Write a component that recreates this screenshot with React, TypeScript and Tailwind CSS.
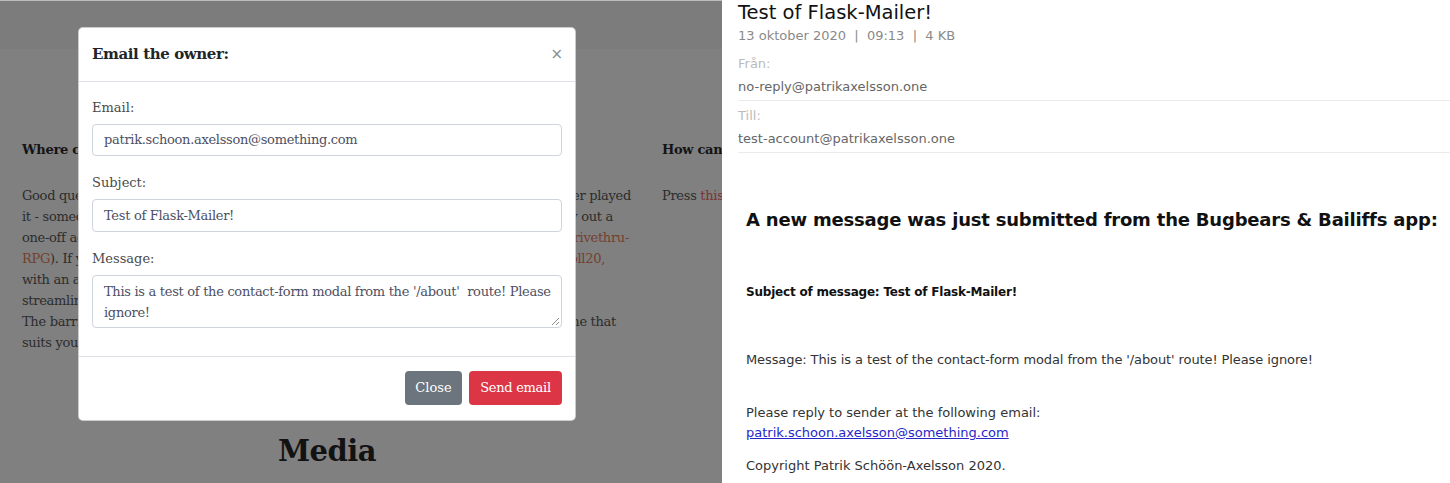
import React from 'react';

type Line = { left: React.ReactNode; right?: React.ReactNode; pr?: string };

const LINK = 'text-[#74402f]';

// ragged right edge of the paragraph, peeking out from behind the modal
const aboutLines: Line[] = [
  { left: 'Good question! Not many have', right: 'ever played', pr: 'pr-[1px]' },
  { left: 'it - someone might', right: 'to try out a', pr: 'pr-[19px]' },
  { left: 'one-off adventure.', right: <span className={LINK}>Drivethru-</span>, pr: 'pr-[3px]' },
  {
    left: (
      <>
        <span className={LINK}>RPG</span>). If you prefer
      </>
    ),
    right: <span className={LINK}>Roll20,</span>,
    pr: 'pr-[27px]',
  },
  { left: 'with an automated' },
  { left: 'streamlined play.' },
  { left: 'The barrier is low', right: 'one that', pr: 'pr-[16px]' },
  { left: 'suits you.' },
];

function Field({ label, children, className }: { label: string; children: React.ReactNode; className: string }) {
  return (
    <div>
      <div className="h-[21px] leading-[21px] text-[13px] text-[#4a4a4a]">{label}</div>
      <div
        className={`mt-[6px] rounded-[4px] border border-[#ced4da] bg-white pl-[11px] pr-[10px] text-[13px] tracking-[-0.3px] text-[#4d4f63] ${className}`}
      >
        {children}
      </div>
    </div>
  );
}

function ContactModal() {
  return (
    <div className="absolute left-[78px] top-[26px] w-[498px] h-[394px] rounded-[5px] border border-black/20 bg-white flex flex-col">
      {/* header */}
      <div className="h-[54px] shrink-0 flex items-center justify-between px-[13px] border-b border-[#dee2e6]">
        <h5 className="text-[15px] font-bold tracking-[-0.4px] text-[#212529]">Email the owner:</h5>
        <span className="mr-[-1px] mt-[-1px] text-[15px] leading-none text-[#8d8d8d] font-['DejaVu_Sans',sans-serif]">×</span>
      </div>

      {/* body */}
      <div className="flex flex-col gap-[16px] px-[13px] pt-[15px] pb-[28px] border-b border-[#dee2e6]">
        <Field label="Email:" className="h-[32px] leading-[30px]">
          patrik.schoon.axelsson@something.com
        </Field>
        <Field label="Subject:" className="h-[33px] leading-[31px]">
          Test of Flask-Mailer!
        </Field>
        <Field label="Message:" className="relative h-[53px] pt-[5px] leading-[21px]">
          This is a test of the contact-form modal from the '/about'&nbsp; route! Please
          <br />
          ignore!
          <svg className="absolute right-[2px] bottom-[2px]" width="8" height="8" viewBox="0 0 8 8">
            <path d="M8 1 L1 8 M8 5 L5 8" stroke="#8a8a8a" strokeWidth="1" />
          </svg>
        </Field>
      </div>

      {/* footer */}
      <div className="flex justify-end gap-[7px] px-[13px] pt-[14px]">
        <button className="h-[34px] w-[57px] rounded-[4px] bg-[#6c757d] text-[13px] text-white">Close</button>
        <button className="h-[34px] w-[93px] rounded-[4px] bg-[#dc3545] text-[13px] tracking-[-0.3px] text-white">
          Send email
        </button>
      </div>
    </div>
  );
}

function AboutPage() {
  return (
    <div className="relative w-[722px] h-full shrink-0 overflow-hidden bg-[#808080] border-t border-[#bcbcbc] font-['DejaVu_Serif',serif]">
      {/* dimmed navbar */}
      <div className="h-[48px] bg-[#7c7c7c]" />

      <div className="flex pl-[22px] pt-[90px]">
        <div className="w-[610px] shrink-0">
          <h6 className="h-[21px] leading-[21px] text-[13px] font-bold tracking-[-0.3px] text-[#141414]">Where could I play?</h6>
          <div className="mt-[25px] text-[13px] leading-[21px] tracking-[-0.3px] text-[#2c2c2c]">
            {aboutLines.map((line, i) => (
              <div key={i} className={`flex justify-between whitespace-nowrap ${line.pr ?? ''}`}>
                <span>{line.left}</span>
                {line.right && <span>{line.right}</span>}
              </div>
            ))}
          </div>
        </div>
        <div className="ml-[30px] w-[400px] shrink-0">
          <h6 className="h-[21px] leading-[21px] text-[13px] font-bold tracking-[-0.3px] text-[#141414] whitespace-nowrap">
            How can I get in touch?
          </h6>
          <p className="mt-[25px] text-[13px] leading-[21px] tracking-[-0.3px] text-[#2c2c2c] whitespace-nowrap">
            Press <span className="text-[#7a3434]">this button</span> to send me an email.
          </p>
        </div>
      </div>

      <h2 className="mt-[78px] w-[654px] text-center text-[29px] leading-[40px] font-bold tracking-[-0.5px] text-[#121212]">
        Media
      </h2>

      <ContactModal />
    </div>
  );
}

function MailView() {
  return (
    <div className="flex-1 h-full overflow-hidden bg-white font-['DejaVu_Sans',sans-serif]">
      <div className="pl-[16px]">
        <h1 className="h-[26px] leading-[26px] text-[19.5px] text-[#111]">Test of Flask-Mailer!</h1>
        <div className="h-[20px] leading-[20px] text-[13px] text-[#8a8a8a] whitespace-pre">
          {'13 oktober 2020  |  09:13  |  4 KB'}
        </div>
        <div className="mt-[8px] pb-[3px] border-b border-[#ebebeb]">
          <div className="h-[20px] leading-[20px] text-[13px] text-[#bbbbbb]">Från:</div>
          <div className="mt-[3px] h-[20px] leading-[20px] text-[13px] text-[#666]">no-reply@patrikaxelsson.one</div>
        </div>
        <div className="pt-[5px] pb-[3px] border-b border-[#ebebeb]">
          <div className="h-[20px] leading-[20px] text-[13px] text-[#bbbbbb]">Till:</div>
          <div className="mt-[3px] h-[20px] leading-[20px] text-[13px] text-[#666]">test-account@patrikaxelsson.one</div>
        </div>
      </div>

      <div className="px-[24px] text-[13px] leading-[20px] text-[#333] whitespace-nowrap">
        <h1 className="mt-[53px] h-[28px] leading-[28px] text-[18px] font-bold tracking-[-0.2px] text-[#111]">
          A new message was just submitted from the Bugbears &amp; Bailiffs app:
        </h1>
        <p className="mt-[48px] text-[12px] font-bold tracking-[-0.2px] text-[#111]">
          Subject of message: Test of Flask-Mailer!
        </p>
        <p className="mt-[48px] tracking-[-0.1px]">
          Message: This is a test of the contact-form modal from the '/about' route! Please ignore!
        </p>
        <p className="mt-[33px]">Please reply to sender at the following email:</p>
        <a className="block w-fit text-[#2727c9] underline" href="#">
          patrik.schoon.axelsson@something.com
        </a>
        <p className="mt-[13px]">Copyright Patrik Schöön-Axelsson 2020.</p>
      </div>
    </div>
  );
}

export default function App() {
  return (
    <div className="flex w-[1450px] h-[483px] overflow-hidden bg-white">
      <AboutPage />
      <MailView />
    </div>
  );
}
